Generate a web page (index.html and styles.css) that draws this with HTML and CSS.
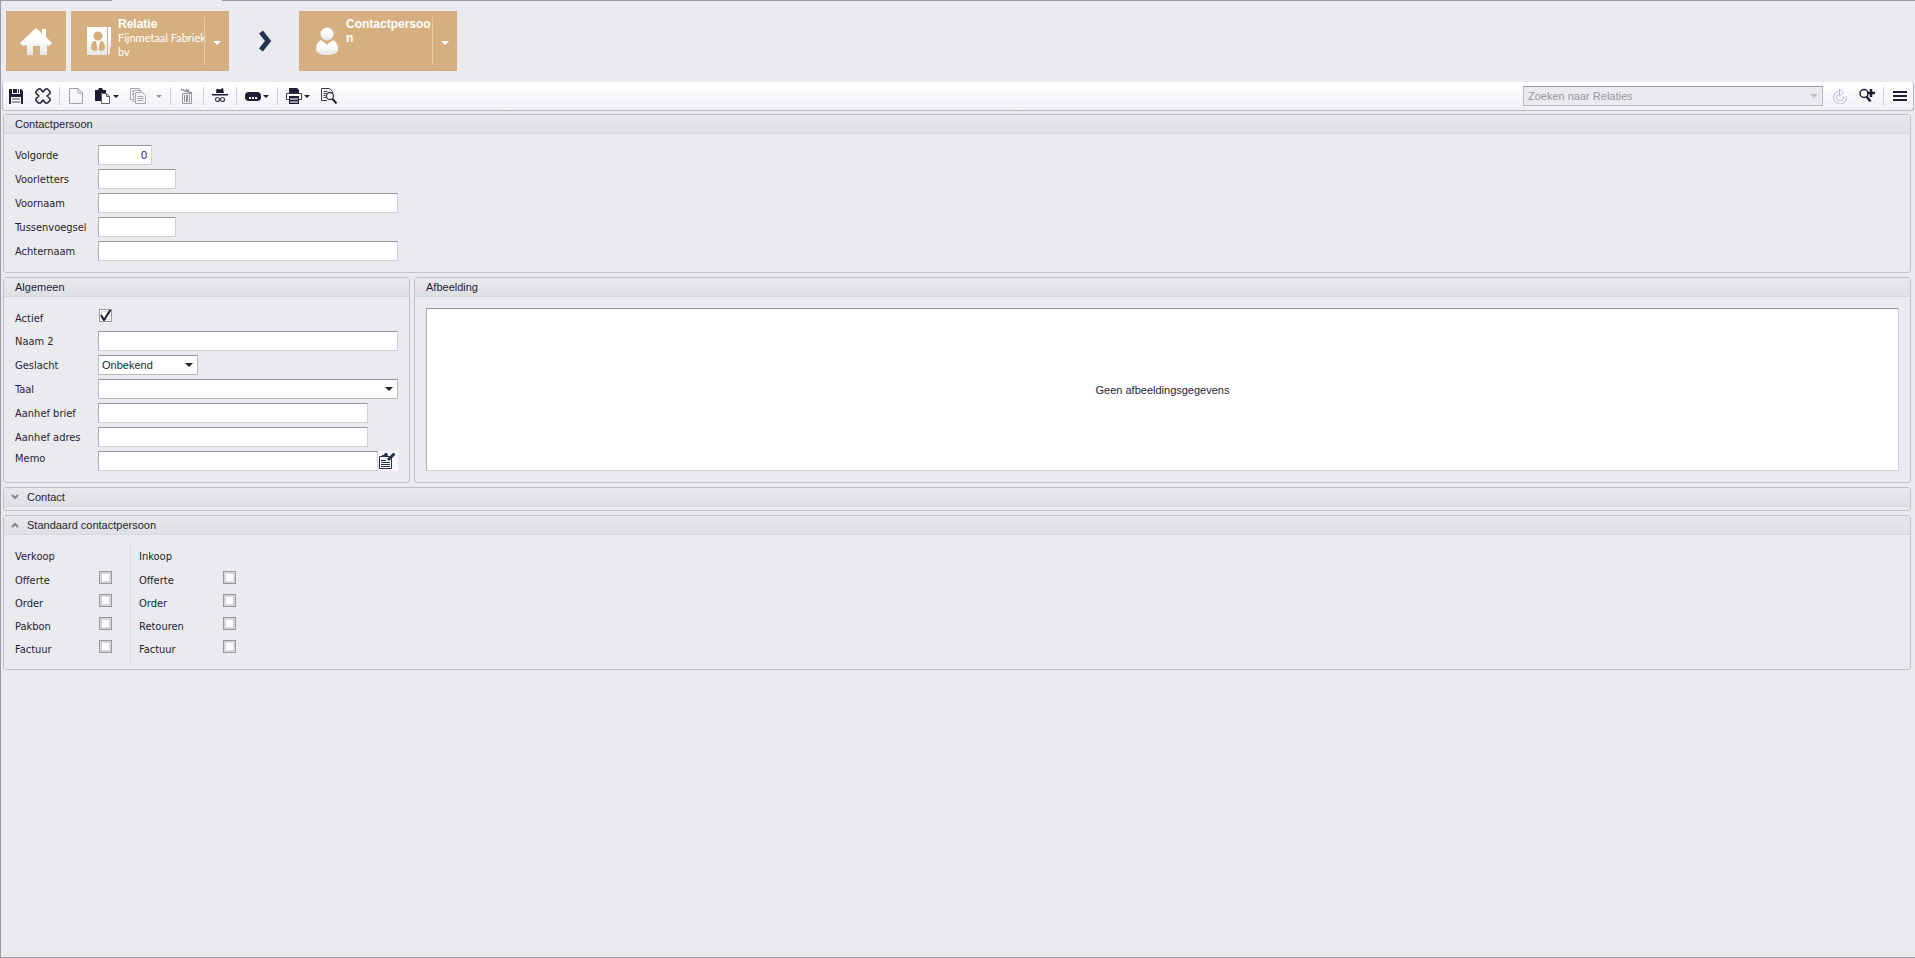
FILE: index.html
```
<!DOCTYPE html>
<html lang="nl">
<head>
  <meta charset="UTF-8">
  <title>Contactpersoon</title>
  <link rel="stylesheet" href="styles.css">
</head>
<body>
  <div class="top-line"><span></span></div>

  <!-- Kruimelpad -->
  <nav class="crumbs">
    <a class="tile home" href="#" aria-label="Home">
      <svg width="32" height="32" viewBox="0 0 32 32">
        <defs>
          <linearGradient id="shade" x1="0" y1="0" x2="0" y2="1">
            <stop offset="0.4" stop-color="#fff"/>
            <stop offset="1" stop-color="#e6e4e4"/>
          </linearGradient>
        </defs>
        <path fill="url(#shade)" d="M16 3l6 5.500V4h4v8l6 6-2 2.500h-3V30h-7v-9h-7v9H7v-9.500H2L0 18z"/>
      </svg>
    </a>
    <div class="tile">
      <a class="tile-main" href="#">
        <svg width="32" height="32" viewBox="0 0 32 32">
          <path fill="url(#shade)" d="M4 2h20v28H4z"/>
          <path fill="url(#shade)" d="M25 2h3v20h-1v7l-2 1z"/>
          <circle cx="15" cy="11" r="4.500" fill="#d5af80"/>
          <path fill="#d5af80" d="M11 16h2l1.500 9-1.500 1c-3 0-5-1-5-3 0-3 1-6 3-7zm6 0h2c2 1 3 4 3 7 0 2-2.500 3-5 3l-1.500-1z"/>
        </svg>
        <span class="tile-text"><b>Relatie</b>Fijnmetaal Fabriek bv</span>
      </a>
      <button class="tile-drop" aria-label="Relatie menu"><i class="arrow"></i></button>
    </div>
    <svg class="chevron" width="14" height="22" viewBox="0 0 14 22"><path d="M3 2l7 9-7 9" fill="none" stroke="#27334d" stroke-width="5"/></svg>
    <div class="tile">
      <a class="tile-main" href="#">
        <svg width="32" height="32" viewBox="0 0 32 32">
          <circle cx="16" cy="9" r="6.500" fill="url(#shade)"/>
          <path fill="url(#shade)" d="M10 15c2 2 4 2.500 6 5 2-2.500 4-3 6-5 3 1.500 5 5 5 9 0 4-5 6-11 6S5 28 5 24c0-4 2-7.500 5-9z"/>
        </svg>
        <span class="tile-text"><b>Contactpersoon</b></span>
      </a>
      <button class="tile-drop" aria-label="Contactpersoon menu"><i class="arrow"></i></button>
    </div>
  </nav>

  <!-- Werkbalk -->
  <div class="toolbar">
    <button class="tool" aria-label="Opslaan">
      <svg width="16" height="16" viewBox="0 0 16 16"><path fill="#1f1d33" d="M1 1h3v5h8V1h1l2 2v13h-2V9H3v7H1zM5 1h4v4h1V1h1v4H5z"/><path fill="#9b9ba8" d="M4 10h8v2H4zm0 3h8v2H4z"/></svg>
    </button>
    <button class="tool" aria-label="Annuleren">
      <svg width="16" height="16" viewBox="0 0 16 16"><path fill="none" stroke="#1f1d33" stroke-width="1.500" stroke-linejoin="round" d="M3.500 1h2L8 4 10.500 1h2L15 3.500v2L12 8l3 2.500v2L12.500 15h-2L8 12l-2.500 3h-2L1 12.500v-2L4 8 1 5.500v-2z"/></svg>
    </button>
    <span class="sep"></span>
    <button class="tool" aria-label="Nieuw" disabled>
      <svg width="16" height="16" viewBox="0 0 16 16"><path fill="none" stroke="#9fa0ac" stroke-linejoin="round" d="M1.500.5H10l4.500 4.500v10.500h-13zM10 .5V5h4.500"/></svg>
    </button>
    <button class="tool" aria-label="Plakken">
      <svg width="16" height="16" viewBox="0 0 16 16"><path fill="#1f1d33" d="M0 2h3l1-2h3l1 2h3v3H6v8H0z"/><path fill="#fff" stroke="#5d5c6c" stroke-linejoin="round" d="M6.500 5.500h5l3 3v7h-8zM11.500 5.500v3h3"/></svg>
      <i class="arrow"></i>
    </button>
    <button class="tool wide" aria-label="Kopiëren" disabled>
      <svg width="16" height="16" viewBox="0 0 16 16"><path fill="none" stroke="#a6a7b1" stroke-linejoin="round" d="M3.500 11.500h-3V.5h9v2M2 3.500h1m-1 3h1M5 13.500H3.500v-11H11v2M5.500 4.500h7l3 3v8h-10zM7.500 8.500h6m-6 2h6m-6 2h6"/></svg>
      <i class="arrow"></i>
    </button>
    <span class="sep"></span>
    <button class="tool" aria-label="Verwijderen" disabled>
      <svg width="16" height="16" viewBox="0 0 16 16"><path fill="none" stroke="#96969f" stroke-width="1.500" d="M2 1.500l11 3.500M7 1.500l3 1"/><path fill="none" stroke="#96969f" d="M3.500 5.500h9v10h-9zM5.500 7v7m2-7v7m1-7v7m2-7v7"/></svg>
    </button>
    <span class="sep"></span>
    <button class="tool" aria-label="Anonimiseren">
      <svg width="16" height="16" viewBox="0 0 16 16"><path fill="#1f1d33" d="M4.500 1h2L8 1.500 11 0l1 5H4zM0 6h16v1.500H0z"/><g fill="none" stroke="#3b394d" stroke-width="1.200"><circle cx="5.500" cy="11.500" r="2"/><circle cx="10.500" cy="11.500" r="2"/></g></svg>
    </button>
    <span class="sep"></span>
    <button class="tool" aria-label="Acties">
      <svg width="16" height="16" viewBox="0 0 16 16"><rect y="4" width="16" height="9" rx="4" fill="#1f1d33"/><path fill="#fff" d="M4 9h2v2H4zm3 0h2v2H7zm3 0h2v2h-2z"/></svg>
      <i class="arrow"></i>
    </button>
    <span class="sep"></span>
    <button class="tool" aria-label="Afdrukken">
      <svg width="16" height="16" viewBox="0 0 16 16"><path fill="#1f1d33" d="M3 0h8l2 2v3H3z"/><path fill="#fff" stroke="#3b394d" d="M.5 5.500h15v6H.5z"/><path fill="#1f1d33" d="M3 8h10v8H3z"/><path fill="#9b9ba8" d="M4 10h8v2H4zm0 3h8v2H4z"/></svg>
      <i class="arrow"></i>
    </button>
    <button class="tool" aria-label="Afdrukvoorbeeld">
      <svg width="16" height="16" viewBox="0 0 16 16"><path fill="none" stroke="#3b394d" d="M6 12.500H.5V.500h8l3 3V5M2.500 3.500h4m-4 2h3m-3 2h2m-2 2h3"/><circle cx="9" cy="8" r="3.500" fill="#fff" stroke="#3b394d" stroke-width="1.300"/><path stroke="#1f1d33" stroke-width="2" d="M11.500 11l4 4.500"/></svg>
    </button>

    <select class="search" aria-label="Zoeken" disabled>
      <option>Zoeken naar Relaties</option>
    </select>
    <button class="tool" aria-label="Vernieuwen" disabled>
      <svg width="16" height="16" viewBox="0 0 16 16"><path fill="none" stroke="#bcc0d8" stroke-width="4" d="M9 4.500a5 5 0 1 0 4 4"/><path fill="none" stroke="#f8f8fc" stroke-width="2" d="M9 4.500a5 5 0 1 0 4 4"/><path fill="#f8f8fc" stroke="#bcc0d8" d="M7.500 1v7l4-3.500z"/></svg>
    </button>
    <button class="tool" aria-label="Uitgebreid zoeken">
      <svg width="16" height="16" viewBox="0 0 16 16"><circle cx="5" cy="5.500" r="4" fill="none" stroke="#1f1d33" stroke-width="1.500"/><path fill="none" stroke="#1f1d33" stroke-width="2.500" d="M7.500 8.500l4 5M12 1v8M8 5h8"/></svg>
    </button>
    <span class="sep"></span>
    <button class="tool" aria-label="Menu">
      <svg width="16" height="16" viewBox="0 0 16 16"><path fill="#1f1d33" d="M1 3h14v2H1zm0 4h14v2H1zm0 4h14v2H1z"/></svg>
    </button>
  </div>

  <main>
    <section class="panel">
      <h2>Contactpersoon</h2>
      <div class="fields">
        <label for="volgorde">Volgorde</label><input class="num" id="volgorde" type="text" value="0">
        <label for="voorletters">Voorletters</label><input class="short" id="voorletters" type="text">
        <label for="voornaam">Voornaam</label><input id="voornaam" type="text">
        <label for="tussenvoegsel">Tussenvoegsel</label><input class="short" id="tussenvoegsel" type="text">
        <label for="achternaam">Achternaam</label><input id="achternaam" type="text">
      </div>
    </section>

    <div class="columns">
      <section class="panel general">
        <h2>Algemeen</h2>
        <div class="fields">
          <label for="actief">Actief</label><input id="actief" type="checkbox" checked>
          <label for="naam2">Naam 2</label><input id="naam2" type="text">
          <label for="geslacht">Geslacht</label>
          <select class="gender" id="geslacht"><option>Onbekend</option></select>
          <label for="taal">Taal</label>
          <select id="taal"><option></option></select>
          <label for="brief">Aanhef brief</label><input class="medium" id="brief" type="text">
          <label for="adres">Aanhef adres</label><input class="medium" id="adres" type="text">
          <label class="memo-label" for="memo">Memo</label>
          <div class="memo">
            <input id="memo" type="text">
            <button aria-label="Memo bewerken">
              <svg width="18" height="18" viewBox="0 0 18 18"><path fill="#fff" stroke="#27334d" d="M.5 4.500h12v12H.5z"/><path fill="#27334d" d="M3 3h2l1-2h2l1 2-1 2H3z"/><path stroke="#27334d" d="M2 8.500h5m-5 2h9m-9 2h9m-9 2h9"/><path stroke="#27334d" stroke-width="3" d="M15.500 1.500L9 8"/></svg>
            </button>
          </div>
        </div>
      </section>
      <section class="panel picture">
        <h2>Afbeelding</h2>
        <div class="picture-box">Geen afbeeldingsgegevens</div>
      </section>
    </div>

    <section class="panel closed">
      <h2><svg width="8" height="6" viewBox="0 0 8 6"><path d="M1 1l3 3 3-3"/></svg>Contact</h2>
    </section>

    <section class="panel">
      <h2><svg width="8" height="6" viewBox="0 0 8 6"><path d="M1 5l3-3 3 3"/></svg>Standaard contactpersoon</h2>
      <div class="defaults">
        <div class="checks">
          <h3>Verkoop</h3>
          <label for="v-offerte">Offerte</label><input id="v-offerte" type="checkbox">
          <label for="v-order">Order</label><input id="v-order" type="checkbox">
          <label for="v-pakbon">Pakbon</label><input id="v-pakbon" type="checkbox">
          <label for="v-factuur">Factuur</label><input id="v-factuur" type="checkbox">
        </div>
        <div class="checks">
          <h3>Inkoop</h3>
          <label for="i-offerte">Offerte</label><input id="i-offerte" type="checkbox">
          <label for="i-order">Order</label><input id="i-order" type="checkbox">
          <label for="i-retouren">Retouren</label><input id="i-retouren" type="checkbox">
          <label for="i-factuur">Factuur</label><input id="i-factuur" type="checkbox">
        </div>
      </div>
    </section>
  </main>
</body>
</html>
```
FILE: styles.css
```
* {
  box-sizing: border-box;
}

body {
  margin: 0;
  min-height: 100vh;
  border: 1px solid #9a9aa6;
  border-top: 0;
  border-right: 0;
  background: #eaebef;
  color: #1f1d33;
  font-family: "Liberation Sans", Arial, sans-serif;
  font-size: 11px;
}

button, input, select {
  font: inherit;
  color: inherit;
  margin: 0;
}

button {
  padding: 0;
  border: 0;
  background: none;
}

svg {
  display: block;
  flex: none;
}

.top-line {
  height: 1px;
  background: #9a9aa6;
}

.top-line span {
  display: block;
  width: 110px;
  height: 1px;
  margin-left: 111px;
  background: #eaebef;
}

/* Kruimelpad */
.crumbs {
  display: flex;
  align-items: center;
  padding: 10px 5px 11px;
}

.tile {
  display: flex;
  width: 158px;
  height: 60px;
  background: #d5af80;
  color: #fff;
}

.tile.home {
  width: 60px;
  margin-right: 5px;
  align-items: center;
  justify-content: center;
}

.tile-main {
  display: flex;
  flex: 1;
  min-width: 0;
  padding: 6px 0 0 12px;
  color: #fff;
  text-decoration: none;
}

.tile-main svg {
  margin-top: 8px;
}

.tile-text {
  flex: none;
  width: 92px;
  margin-left: 3px;
  font-family: Lato, Arial, sans-serif;
  line-height: 14px;
  overflow-wrap: anywhere;
}

.tile-text b {
  display: block;
  width: 86px;
  font-family: "Liberation Sans", Arial, sans-serif;
  font-size: 12px;
}

.tile-drop {
  width: 25px;
  height: 48px;
  margin: 6px 0;
  border-left: 1px solid #e4cbab;
}

.chevron {
  margin: 0 27px 0 29px;
}

.arrow {
  display: inline-block;
  border: 3px solid transparent;
  border-top-color: currentColor;
  border-bottom: 0;
}

.tile-drop .arrow {
  border-width: 4px 4px 0;
}

/* Werkbalk */
.toolbar {
  display: flex;
  align-items: center;
  height: 29px;
  margin: 0 1px;
  padding: 0 5px;
  border: 1px solid #b9bac3;
  border-top: 0;
  border-radius: 3px;
  background: linear-gradient(#fff, #f0f1f6);
}

.tool {
  display: flex;
  align-items: center;
  gap: 2px;
  margin-right: 8px;
}

.tool + .tool {
  margin-left: 3px;
}

.tool:last-child {
  margin-right: 0;
}

.tool.wide {
  gap: 10px;
}

.tool:disabled {
  color: #96969f;
}

.sep {
  width: 1px;
  height: 18px;
  margin-right: 8px;
  background: #cfd0d7;
}

select {
  appearance: none;
  border: 1px solid #b9bac3;
  border-top-color: #96969f;
  border-radius: 0;
  background: #fff url("data:image/svg+xml,%3Csvg xmlns='http://www.w3.org/2000/svg' width='8' height='4'%3E%3Cpath d='M0 0h8L4 4z' fill='%231f1d33'/%3E%3C/svg%3E") no-repeat right 4px center;
}

.search {
  width: 300px;
  height: 20px;
  margin: 0 9px 0 auto;
  padding: 0 4px;
  background: #eaebef url("data:image/svg+xml,%3Csvg xmlns='http://www.w3.org/2000/svg' width='8' height='4'%3E%3Cpath d='M0 0h8L4 4z' fill='%23c0c1c9'/%3E%3C/svg%3E") no-repeat right 4px center;
  color: #96969f;
  opacity: 1;
}

/* Panelen */
main {
  display: flex;
  flex-direction: column;
  gap: 4px;
  padding: 3px 4px 4px 2px;
}

.panel {
  border: 1px solid #bfc0c9;
  border-radius: 3px;
}

h2 {
  display: flex;
  align-items: center;
  height: 19px;
  margin: 0;
  padding: 0 11px 1px;
  border-bottom: 1px solid #d6d7dc;
  background: linear-gradient(#e7e8eb, #dfe0e4);
  font-size: 11px;
  font-weight: normal;
}

h2 svg {
  margin: 0 8px 0 -4px;
  fill: none;
  stroke: #85858f;
  stroke-width: 2;
}

.closed {
  padding-bottom: 3px;
}

.fields {
  display: grid;
  grid-template-columns: 83px 300px;
  row-gap: 4px;
  padding: 11px;
}

.general .fields {
  grid-template-rows: 19px;
}

label, h3 {
  height: 20px;
  font-family: "DejaVu Sans Condensed", Tahoma, sans-serif;
  font-size: 11px;
  font-weight: normal;
  line-height: 22px;
}

input[type="text"] {
  width: 100%;
  height: 20px;
  padding: 0 4px;
  border: 1px solid #d0d1d7;
  border-top-color: #96969f;
  border-left-color: #b0b1ba;
  border-radius: 0;
  background: #fff;
}

.fields select {
  width: 100%;
  height: 20px;
  padding: 0 3px;
}

.fields .num {
  width: 54px;
  text-align: right;
}

.fields .short {
  width: 78px;
}

.fields .medium {
  width: 270px;
}

.fields .gender {
  width: 100px;
}

input[type="checkbox"] {
  appearance: none;
  width: 13px;
  height: 13px;
  margin: 1px 0 0 1px;
  border: 1px solid #96969f;
  background: #fff;
  box-shadow: inset 0 0 0 2px #d6d7dc;
}

#actief {
  background: #fff url("data:image/svg+xml,%3Csvg xmlns='http://www.w3.org/2000/svg' width='13' height='13'%3E%3Cpath d='M2.500 2.500h8v8h-8z' fill='none' stroke='%23d6d7dc'/%3E%3Cpath d='M2 6l3 5 7-11' fill='none' stroke='%231f1d33' stroke-width='2'/%3E%3C/svg%3E") no-repeat center border-box;
  box-shadow: none;
}

.memo {
  display: flex;
}

.memo input {
  flex: 1;
}

.memo button {
  width: 20px;
  height: 20px;
  padding: 1px;
  background: #f7f8fb;
}

.fields .memo-label {
  line-height: 16px;
}

.columns {
  display: flex;
  gap: 4px;
}

.picture {
  display: flex;
  flex: 1;
  flex-direction: column;
}

.picture-box {
  display: flex;
  flex: 1;
  align-items: center;
  justify-content: center;
  margin: 11px;
  border: 1px solid #d0d1d7;
  border-top-color: #96969f;
  border-left-color: #b0b1ba;
  background: #fff;
}

.defaults {
  display: flex;
  padding: 11px 11px 7px;
}

.checks {
  display: grid;
  grid-template-columns: 83px 32px;
  grid-template-rows: 24px;
  grid-auto-rows: 23px;
}

.checks h3 {
  grid-column: span 2;
  margin: 0;
}

.checks + .checks {
  padding-left: 8px;
  border-left: 1px solid #d6d7dc;
}
```
